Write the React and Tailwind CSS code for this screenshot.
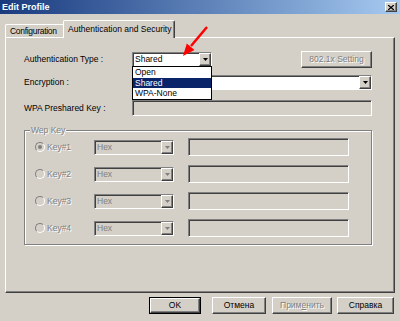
const raised =
  'border border-t-white border-l-white border-r-[#404040] border-b-[#404040] shadow-[inset_-1px_-1px_0_#808080]';
const sunken =
  'border border-t-[#808080] border-l-[#808080] border-r-white border-b-white shadow-[inset_1px_1px_0_#404040]';
const grayText = 'text-[#808080] [text-shadow:1px_1px_0_#fff]';

function Tri({ gray }) {
  return (
    <svg width="5" height="3" viewBox="0 0 5 3">
      <path d="M0 0h5L2.5 3z" fill={gray ? '#808080' : '#000'} />
    </svg>
  );
}

function Combo({ value, className, white, disabled }) {
  return (
    <div
      className={`${sunken} flex h-[15px] items-stretch ${white ? 'bg-white' : 'bg-[#d4d0c8]'} ${className}`}
    >
      <span className={`flex flex-1 items-center pl-[2px] ${disabled ? 'text-[#808080]' : ''}`}>
        {value}
      </span>
      <div className={`${raised} flex w-[12px] items-center justify-center bg-[#d4d0c8]`}>
        <Tri gray={disabled} />
      </div>
    </div>
  );
}

function Button({ children, className, disabled }) {
  return (
    <div
      className={`${raised} flex h-[17px] items-center justify-center bg-[#d4d0c8] ${
        disabled ? grayText : ''
      } ${className}`}
    >
      {children}
    </div>
  );
}

function KeyRow({ label, checked }) {
  return (
    <div className="flex h-[18px] items-center">
      <div className="flex w-[59px] items-center">
        <div className="flex h-[10px] w-[10px] items-center justify-center rounded-full border border-t-[#808080] border-l-[#808080] border-r-white border-b-white bg-[#d4d0c8]">
          {checked && <div className="h-[4px] w-[4px] rounded-full bg-[#808080]" />}
        </div>
        <span className={`ml-[2px] ${grayText}`}>{label}</span>
      </div>
      <Combo value="Hex" disabled className="w-[80px]" />
      <div className={`${sunken} ml-[14px] h-[18px] w-[161px] bg-[#d4d0c8]`} />
    </div>
  );
}

export default function App() {
  return (
    <div className="relative h-[321px] w-[400px] overflow-hidden bg-[#d4d0c8] font-['Liberation_Sans',Arial,sans-serif] text-[8.5px] leading-none text-black">
      {/* Заголовок окна */}
      <div className="flex h-[14px] items-center justify-between bg-linear-to-r from-[#1a3a7e] to-[#a6caf0] pl-[2px] pr-[3px]">
        <span className="text-[9px] font-bold text-white">Edit Profile</span>
        <div className={`${raised} flex h-[10px] w-[12px] items-center justify-center bg-[#d4d0c8]`}>
          <svg width="6" height="5" viewBox="0 0 6 5">
            <path d="M0 0L6 5M6 0L0 5" stroke="#000" strokeWidth="1.3" />
          </svg>
        </div>
      </div>

      {/* Вкладки */}
      <div className="mt-[6px] flex h-[17px] items-end px-[5px]">
        <div className="flex h-[13px] w-[58px] items-center whitespace-nowrap rounded-tl-[2px] border-t border-l border-t-white border-l-white pl-[4px] tracking-[-0.3px]">
          Configuration
        </div>
        <div className="relative z-10 -mb-px flex h-[18px] w-[112px] items-center rounded-t-[2px] border-t border-l border-r border-t-white border-l-white border-r-[#404040] bg-[#d4d0c8] pl-[4px] shadow-[inset_-1px_0_0_#808080]">
          Authentication and Security
        </div>
      </div>

      {/* Панель */}
      <div className={`${raised} mx-[5px] h-[256px] w-[390px] pl-[18px] pt-[13px]`}>
        <div className="flex h-[17px] items-center">
          <span className="w-[108px]">Authentication Type :</span>
          <Combo value="Shared" white className="w-[80px]" />
          <Button disabled className="ml-[89px] w-[71px]">
            802.1x Setting
          </Button>
        </div>
        <div className="mt-[7px] flex h-[15px] items-center">
          <span className="w-[108px]">Encryption :</span>
          <Combo value="" white className="w-[240px]" />
        </div>
        <div className="mt-[10px] flex h-[16px] items-center">
          <span className="w-[108px]">WPA Preshared Key :</span>
          <div className={`${sunken} h-[16px] w-[240px] bg-[#d4d0c8]`} />
        </div>

        <div className="relative mt-[14px] h-[115px] w-[348px] border border-[#808080] pl-[10px] pt-[7px] shadow-[inset_1px_1px_0_#fff,1px_1px_0_#fff]">
          <span className={`absolute -top-[5px] left-[5px] bg-[#d4d0c8] px-px ${grayText}`}>
            Wep Key
          </span>
          <div className="flex flex-col gap-[9px]">
            <KeyRow label="Key#1" checked />
            <KeyRow label="Key#2" />
            <KeyRow label="Key#3" />
            <KeyRow label="Key#4" />
          </div>
        </div>
      </div>

      {/* Кнопки */}
      <div className="mt-[4px] flex pl-[149px]">
        <div className="h-[17px] w-[52px] border border-black">
          <div className={`${raised} flex h-full items-center justify-center`}>OK</div>
        </div>
        <Button className="ml-[11px] w-[54px]">Отмена</Button>
        <Button disabled className="ml-[6px] w-[60px]">
          <span>
            Прим<span className="underline">е</span>нить
          </span>
        </Button>
        <Button className="ml-[5px] w-[57px]">Справка</Button>
      </div>

      {/* Открытый список */}
      <div className="absolute left-[132px] top-[66px] w-[80px] border border-black bg-white">
        <div className="flex h-[11px] items-center pl-[2px]">Open</div>
        <div className="flex h-[10px] items-center bg-[#0a246a] pl-[2px] text-white">Shared</div>
        <div className="flex h-[11px] items-center pl-[2px]">WPA-None</div>
      </div>

      {/* Красная стрелка */}
      <svg className="pointer-events-none absolute left-0 top-0" width="400" height="321">
        <path d="M207 27L191 46" stroke="#ff0000" strokeWidth="2.5" />
        <path d="M183 56L186.8 43.6L194.5 50z" fill="#ff0000" />
      </svg>
    </div>
  );
}
